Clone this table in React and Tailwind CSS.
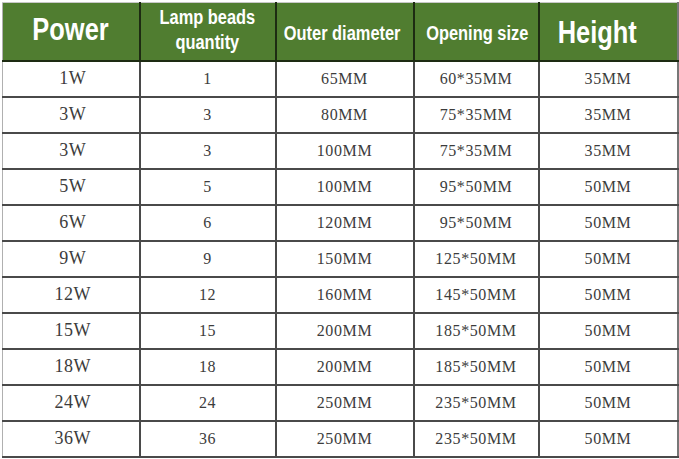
const rows = [
  ["1W", "1", "65MM", "60*35MM", "35MM"],
  ["3W", "3", "80MM", "75*35MM", "35MM"],
  ["3W", "3", "100MM", "75*35MM", "35MM"],
  ["5W", "5", "100MM", "95*50MM", "50MM"],
  ["6W", "6", "120MM", "95*50MM", "50MM"],
  ["9W", "9", "150MM", "125*50MM", "50MM"],
  ["12W", "12", "160MM", "145*50MM", "50MM"],
  ["15W", "15", "200MM", "185*50MM", "50MM"],
  ["18W", "18", "200MM", "185*50MM", "50MM"],
  ["24W", "24", "250MM", "235*50MM", "50MM"],
  ["36W", "36", "250MM", "235*50MM", "50MM"],
];

const cell = "border-r-2 border-b-2 border-[#1d2b12] p-0";
const narrow =
  "inline-block whitespace-nowrap scale-x-[0.82] font-['Liberation_Sans',sans-serif] font-bold text-white";

export default function App() {
  return (
    <div className="w-[679px] h-[459px] bg-white pt-[2px] pl-[2px]">
      <table className="border-collapse table-fixed w-[675px] border-l border-t border-l-[#b0b0b0] border-t-[#c8c8c8]">
        <colgroup>
          <col className="w-[137px]" />
          <col className="w-[136px]" />
          <col className="w-[138px]" />
          <col className="w-[125px]" />
          <col className="w-[139px]" />
        </colgroup>
        <thead>
          <tr className="h-[58px] bg-[#507d30]">
            <th className={cell}>
              <span className={`${narrow} text-[31px] leading-none pb-[4px]`}>Power</span>
            </th>
            <th className={cell}>
              <span className={`${narrow} text-[20px] leading-[25px] font-semibold pb-[3px]`}>
                Lamp beads
                <br />
                quantity
              </span>
            </th>
            <th className={`${cell} pr-[8px]`}>
              <span className={`${narrow} text-[20px] leading-none pt-[6px] -mx-[6px]`}>Outer diameter</span>
            </th>
            <th className={`${cell} pr-[4px]`}>
              <span className={`${narrow} text-[20px] leading-none pt-[6px]`}>Opening size</span>
            </th>
            <th className={`${cell} pr-[22px] border-r-[#777]`}>
              <span className={`${narrow} text-[31px] leading-none pt-[4px]`}>Height</span>
            </th>
          </tr>
        </thead>
        <tbody>
          {rows.map((r, i) => (
            <tr key={i} className="h-[36px]">
              {r.map((c, j) => (
                <td
                  key={j}
                  className={`p-0 text-center text-[#3c3c3c] font-['Liberation_Serif',serif] border-r-2 border-b-2 border-[#4a4a4a] ${
                    j === 0 ? "text-[18px] tracking-[0.5px] pl-[4px]" : "text-[16px] tracking-[0.6px]"
                  } ${j === 4 ? "border-r-[#777]" : ""}`}
                >
                  {c}
                </td>
              ))}
            </tr>
          ))}
        </tbody>
      </table>
    </div>
  );
}
